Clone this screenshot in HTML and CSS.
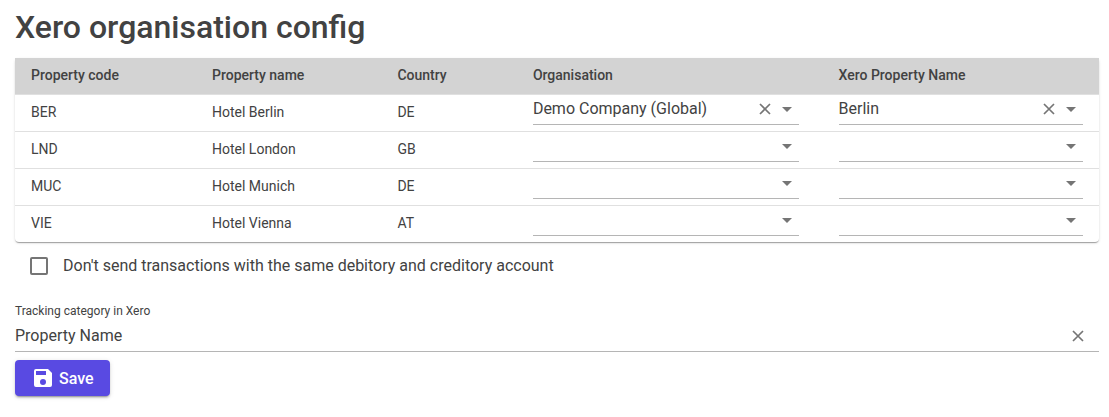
FILE: index.html
```html
<!DOCTYPE html>
<html lang="en">
<head>
    <meta charset="utf-8">
    <title>Xero organisation config</title>
    <link rel="stylesheet" href="styles.css">
</head>
<body>
    <!-- Shared icons -->
    <svg class="icon-defs" aria-hidden="true">
        <symbol id="icon-close" viewBox="0 0 12 12">
            <path d="M1 1L11 11M11 1L1 11" fill="none" stroke="currentColor" stroke-width="1.7"/>
        </symbol>
        <symbol id="icon-arrow" viewBox="0 0 24 24">
            <path d="M7 10l5 5 5-5z" fill="currentColor"/>
        </symbol>
    </svg>

    <h1>Xero organisation config</h1>

    <form>
        <table class="config-table">
            <thead>
                <tr>
                    <th class="col-code">Property code</th>
                    <th class="col-name">Property name</th>
                    <th class="col-country">Country</th>
                    <th class="col-org">Organisation</th>
                    <th class="col-xero">Xero Property Name</th>
                </tr>
            </thead>
            <tbody>
                <tr>
                    <td>BER</td>
                    <td>Hotel Berlin</td>
                    <td>DE</td>
                    <td class="col-org">
                        <div class="field">
                            <select aria-label="Organisation for BER"><option></option><option selected>Demo Company (Global)</option></select>
                            <button type="button" class="clear" aria-label="Clear"><svg><use href="#icon-close"/></svg></button>
                            <svg class="arrow"><use href="#icon-arrow"/></svg>
                        </div>
                    </td>
                    <td>
                        <div class="field">
                            <select aria-label="Xero property for BER"><option></option><option selected>Berlin</option></select>
                            <button type="button" class="clear" aria-label="Clear"><svg><use href="#icon-close"/></svg></button>
                            <svg class="arrow"><use href="#icon-arrow"/></svg>
                        </div>
                    </td>
                </tr>
                <tr>
                    <td>LND</td>
                    <td>Hotel London</td>
                    <td>GB</td>
                    <td class="col-org">
                        <div class="field">
                            <select aria-label="Organisation for LND"><option></option></select>
                            <svg class="arrow"><use href="#icon-arrow"/></svg>
                        </div>
                    </td>
                    <td>
                        <div class="field">
                            <select aria-label="Xero property for LND"><option></option></select>
                            <svg class="arrow"><use href="#icon-arrow"/></svg>
                        </div>
                    </td>
                </tr>
                <tr>
                    <td>MUC</td>
                    <td>Hotel Munich</td>
                    <td>DE</td>
                    <td class="col-org">
                        <div class="field">
                            <select aria-label="Organisation for MUC"><option></option></select>
                            <svg class="arrow"><use href="#icon-arrow"/></svg>
                        </div>
                    </td>
                    <td>
                        <div class="field">
                            <select aria-label="Xero property for MUC"><option></option></select>
                            <svg class="arrow"><use href="#icon-arrow"/></svg>
                        </div>
                    </td>
                </tr>
                <tr>
                    <td>VIE</td>
                    <td>Hotel Vienna</td>
                    <td>AT</td>
                    <td class="col-org">
                        <div class="field">
                            <select aria-label="Organisation for VIE"><option></option></select>
                            <svg class="arrow"><use href="#icon-arrow"/></svg>
                        </div>
                    </td>
                    <td>
                        <div class="field">
                            <select aria-label="Xero property for VIE"><option></option></select>
                            <svg class="arrow"><use href="#icon-arrow"/></svg>
                        </div>
                    </td>
                </tr>
            </tbody>
        </table>

        <div class="check-row">
            <input type="checkbox" id="skip-same">
            <label for="skip-same">Don't send transactions with the same debitory and creditory account</label>
        </div>

        <label class="small-label" for="tracking">Tracking category in Xero</label>
        <div class="field tracking">
            <input type="text" id="tracking" value="Property Name">
            <button type="button" class="clear" aria-label="Clear"><svg><use href="#icon-close"/></svg></button>
        </div>

        <button type="submit" class="save">
            <svg viewBox="0 0 24 24"><path fill="currentColor" d="M15 9H5V5h10m-3 14a3 3 0 0 1-3-3 3 3 0 0 1 3-3 3 3 0 0 1 3 3 3 3 0 0 1-3 3m5-16H5a2 2 0 0 0-2 2v14a2 2 0 0 0 2 2h14a2 2 0 0 0 2-2V7l-4-4z"/></svg>
            Save
        </button>
    </form>
</body>
</html>
```

FILE: styles.css
```css
* {
    box-sizing: border-box;
}
body {
    margin: 0;
    padding: 8px 10px 16px 15px;
    font-family: Roboto, "Liberation Sans", sans-serif;
    font-size: 16px;
    color: #424242;
    background-color: white;
}
h1 {
    margin: 0 0 12px;
    font-size: 32px;
    line-height: 38px;
    font-weight: 500;
}
input, select, button {
    font: inherit;
    color: inherit;
}
.icon-defs {
    display: none;
}

/* Property table */
.config-table {
    width: 100%;
    table-layout: fixed;
    border-collapse: separate;
    border-spacing: 0;
    border-radius: 4px;
    font-size: 14px;
    box-shadow: 0 2px 1px -1px rgba(0, 0, 0, 0.2), 0 1px 1px 0 rgba(0, 0, 0, 0.14), 0 1px 3px 0 rgba(0, 0, 0, 0.12);
}
th, td {
    padding: 0 16px 2px;
    line-height: 34px;
    text-align: left;
    vertical-align: top;
}
th {
    background-color: lightgray;
    font-weight: 500;
}
td {
    border-top: 1px solid #e0e0e0;
}
.col-code {
    width: 16.7%;
}
.col-name {
    width: 17.1%;
}
.col-country {
    width: 12.5%;
}
.col-org {
    width: 28.2%;
    padding-right: 24px;
}

/* Underlined inputs */
.field {
    display: flex;
    align-items: center;
    height: 30px;
    padding-bottom: 2px;
    border-bottom: 1px solid #b5b5b5;
    font-size: 16px;
    line-height: 24px;
}
.field select, .field input {
    flex: 1;
    min-width: 0;
    height: 24px;
    padding: 0;
    border: none;
    outline: none;
    background: none;
    appearance: none;
}
.clear {
    display: flex;
    align-items: center;
    justify-content: center;
    width: 20px;
    height: 24px;
    padding: 0;
    border: none;
    background: none;
    color: #757575;
    cursor: pointer;
}
.clear svg {
    width: 12px;
    height: 12px;
}
.arrow {
    width: 24px;
    height: 24px;
    color: #757575;
    pointer-events: none;
}

.check-row {
    display: flex;
    align-items: center;
    gap: 15px;
    padding: 12px 15px;
    line-height: 24px;
}
.check-row input {
    width: 18px;
    height: 18px;
    margin: 0;
    border: 2px solid #757575;
    border-radius: 2px;
    appearance: none;
}
.check-row input:checked {
    background-color: #594ae2;
}

.small-label {
    display: block;
    margin-top: 13px;
    font-size: 12px;
    line-height: 16px;
}
.tracking {
    height: 33px;
    padding: 2px 0 0;
}
.tracking .clear {
    width: 42px;
}

.save {
    display: flex;
    align-items: center;
    gap: 4px;
    height: 36px;
    margin-top: 8px;
    padding: 0 16px;
    border: none;
    border-radius: 4px;
    background-color: #594ae2;
    color: white;
    font-weight: 500;
    box-shadow: 0 3px 1px -2px rgba(0, 0, 0, 0.2), 0 2px 2px 0 rgba(0, 0, 0, 0.14), 0 1px 5px 0 rgba(0, 0, 0, 0.12);
    cursor: pointer;
}
.save svg {
    width: 24px;
    height: 24px;
}
```
